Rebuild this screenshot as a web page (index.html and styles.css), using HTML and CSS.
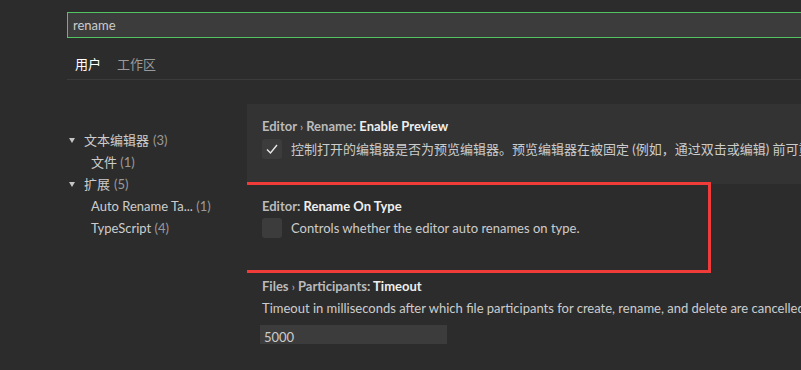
FILE: index.html
```html
<!DOCTYPE html>
<html>
<head>
  <title>设置</title>
  <link rel="stylesheet" href="styles.css">
</head>
<body>
  <div class="settings">
    <div class="header">
      <div class="search">rename</div>
      <div class="tabs">
        <span class="tab active">用户</span>
        <span class="tab">工作区</span>
      </div>
    </div>

    <div class="body">
      <ul class="tree">
        <li class="group"><span class="twisty"></span>文本编辑器 <span class="count">(3)</span></li>
        <li class="leaf">文件 <span class="count">(1)</span></li>
        <li class="group"><span class="twisty"></span>扩展 <span class="count">(5)</span></li>
        <li class="leaf">Auto Rename Ta... <span class="count">(1)</span></li>
        <li class="leaf">TypeScript <span class="count">(4)</span></li>
      </ul>

      <div class="list">
        <div class="item focused">
          <div class="title">Editor <span class="sep">›</span> Rename: <b>Enable Preview</b></div>
          <div class="row">
            <span class="checkbox">
              <svg width="20" height="20" viewBox="0 0 20 20"><path d="M5 10.5 L8.5 14 L15 6" fill="none" stroke="#e8e8e8" stroke-width="1.4"/></svg>
            </span>
            <span class="desc">控制打开的编辑器是否为预览编辑器。预览编辑器在被固定 (例如，通过双击或编辑) 前可重用，其字体样式为斜体。</span>
          </div>
        </div>

        <div class="item">
          <div class="title">Editor: <b>Rename On Type</b></div>
          <div class="row">
            <span class="checkbox"></span>
            <span class="desc">Controls whether the editor auto renames on type.</span>
          </div>
        </div>

        <div class="item">
          <div class="title">Files <span class="sep">›</span> Participants: <b>Timeout</b></div>
          <div class="desc plain">Timeout in milliseconds after which file participants for create, rename, and delete are cancelled. Use `0` to disable participants.</div>
          <div class="input">5000</div>
        </div>

        <div class="highlight"></div>
      </div>
    </div>
  </div>
</body>
</html>
```

FILE: styles.css
```css
* {
  margin: 0;
  padding: 0;
  box-sizing: border-box;
}

body {
  background: #2c2c2c;
  color: #cccccc;
  font-family: Lato, 'Noto Sans CJK SC', sans-serif;
  font-size: 13px;
  overflow: hidden;
  width: 801px;
  height: 370px;
}

.settings {
  padding-left: 67px;
}

.header {
  padding-top: 12px;
  width: 760px;
  border-bottom: 1px solid #3b3b3b;
}

.search {
  height: 26px;
  border: 1px solid #52c562;
  border-right: none;
  background: #3c3c3c;
  color: #cccccc;
  padding-left: 5px;
  line-height: 24px;
}

.tabs {
  display: flex;
  gap: 16px;
  padding: 15px 0 4px 8px;
  line-height: 22px;
}

.tab {
  color: #9a9a9a;
}

.tab.active {
  color: #ffffff;
}

.body {
  display: flex;
}

.tree {
  list-style: none;
  width: 180px;
  flex-shrink: 0;
  padding-top: 49px;
}

.tree li {
  line-height: 22px;
  color: #cccccc;
  white-space: nowrap;
}

.tree .group {
  display: flex;
  align-items: center;
}

.tree .leaf {
  padding-left: 24px;
}

.twisty {
  width: 0;
  height: 0;
  margin: 1px 9px 0 2px;
  border-left: 3px solid transparent;
  border-right: 3px solid transparent;
  border-top: 5px solid #c5c5c5;
}

.tree .group .count {
  margin-left: 4px;
}

.count {
  color: #9a9a9a;
}

.list {
  position: relative;
  flex: 1;
  padding-top: 24px;
  overflow: hidden;
}

.item {
  height: 80px;
  padding: 13px 0 0 15px;
}

.item.focused {
  background: #333333;
}

.title {
  line-height: 18px;
  color: #bbbbbb;
  font-weight: 700;
  white-space: nowrap;
}

.title .sep {
  font-weight: 400;
  font-size: 11px;
}

.title b {
  color: #eeeeee;
  font-weight: 700;
}

.row {
  display: flex;
  align-items: center;
  gap: 9px;
  margin-top: 3px;
}

.checkbox {
  width: 20px;
  height: 20px;
  flex-shrink: 0;
  background: #3c3c3c;
  border-radius: 3px;
}

.checkbox svg {
  display: block;
}

.desc {
  white-space: nowrap;
  color: #cccccc;
  line-height: 18px;
}

.desc.plain {
  margin-top: 3px;
}

.input {
  width: 187px;
  height: 24px;
  margin: 8px 0 0 -2px;
  background: #3c3c3c;
  color: #cccccc;
  line-height: 24px;
  padding-left: 4px;
}

.highlight {
  position: absolute;
  left: -12px;
  top: 102px;
  width: 476px;
  height: 91px;
  border: 3px solid #f03b3b;
}
```
